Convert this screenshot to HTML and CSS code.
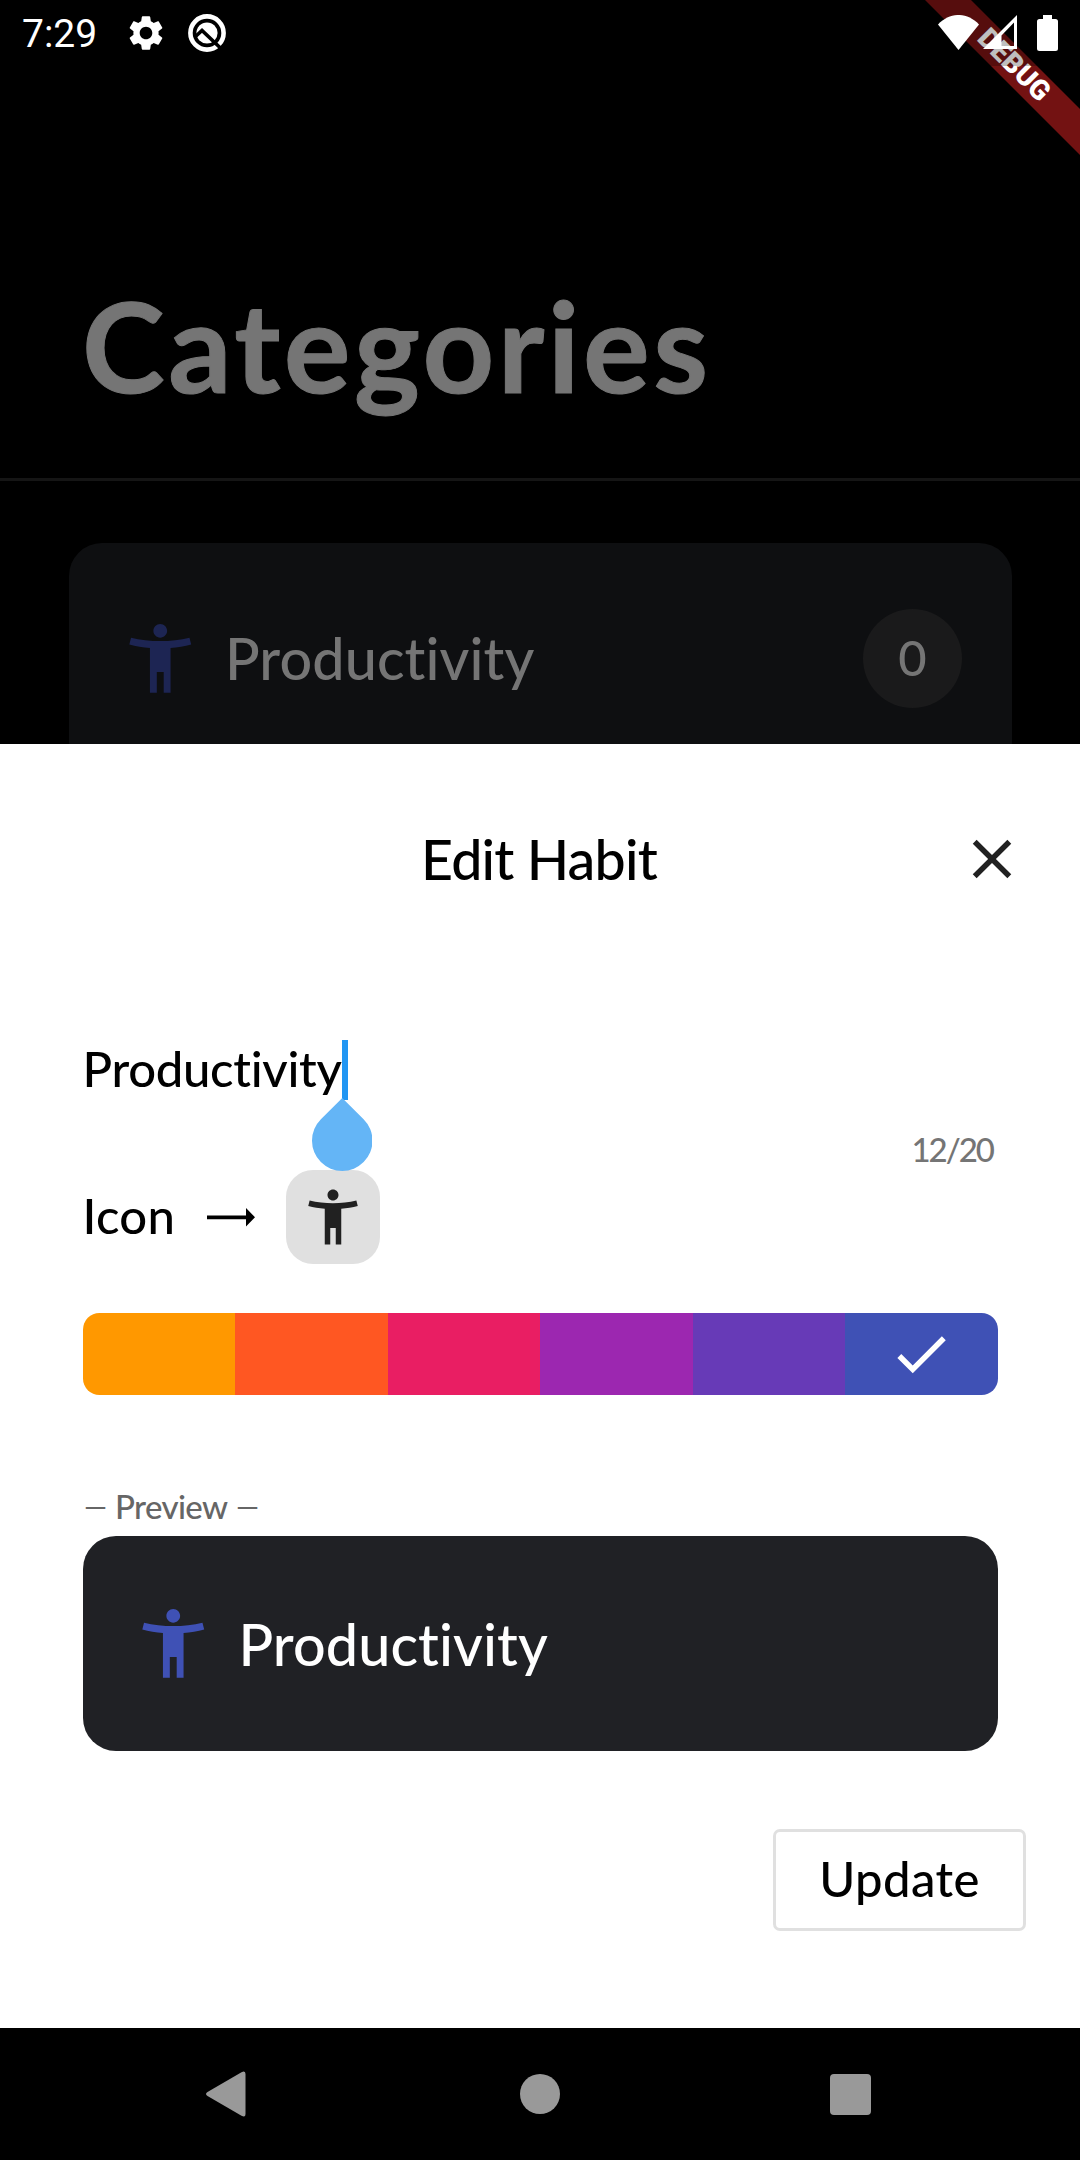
FILE: index.html
```
<!DOCTYPE html>
<html lang="en">
<head>
<meta charset="utf-8">
<title>Edit Habit</title>
<link rel="stylesheet" href="styles.css">
</head>
<body>
<svg class="defs" aria-hidden="true">
  <symbol id="person" viewBox="0 0 24 24"><path d="M20.5 6c-2.61.7-5.67 1-8.5 1s-5.89-.3-8.5-1L3 8c1.86.5 4 .83 6 1v13h2v-6h2v6h2V9c2-.17 4.14-.5 6-1l-.5-2zM12 6c1.1 0 2-.9 2-2s-.9-2-2-2-2 .9-2 2 .9 2 2 2z"/></symbol>
</svg>
<div class="screen">
  <div class="banner">
    <span class="banner-text">DEBUG</span>
  </div>
  <div class="statusbar">
    <span class="clock">7:29</span>
    <svg class="gear" viewBox="0 0 24 24"><path d="M19.14 12.94c.04-.3.06-.61.06-.94 0-.32-.02-.64-.07-.94l2.03-1.58c.18-.14.23-.41.12-.61l-1.92-3.32c-.12-.22-.37-.29-.59-.22l-2.39.96c-.5-.38-1.03-.7-1.62-.94l-.36-2.54c-.04-.24-.24-.41-.48-.41h-3.84c-.24 0-.43.17-.47.41l-.36 2.54c-.59.24-1.13.57-1.62.94l-2.39-.96c-.22-.08-.47 0-.59.22L2.74 8.87c-.12.21-.08.47.12.61l2.03 1.58c-.05.3-.09.63-.09.94s.02.64.07.94l-2.03 1.58c-.18.14-.23.41-.12.61l1.92 3.32c.12.22.37.29.59.22l2.39-.96c.5.38 1.03.7 1.62.94l.36 2.54c.05.24.24.41.48.41h3.84c.24 0 .44-.17.47-.41l.36-2.54c.59-.24 1.13-.56 1.62-.94l2.39.96c.22.08.47 0 .59-.22l1.92-3.32c.12-.22.07-.47-.12-.61l-2.01-1.58zM12 15.6c-1.98 0-3.6-1.62-3.6-3.6s1.62-3.6 3.6-3.6 3.6 1.62 3.6 3.6-1.62 3.6-3.6 3.6z"/></svg>
    <svg class="ring" viewBox="0 0 38 38">
      <circle cx="19" cy="19" r="16.6" fill="none" stroke="#fff" stroke-width="4.6"/>
      <circle cx="19" cy="19" r="10.6" fill="#fff"/>
      <path d="M7.500 22.500l6.500-6L33 34.500" fill="none" stroke="#000" stroke-width="3.600"/>
    </svg>
    <svg class="wifi" viewBox="0 0 41 35"><path d="M0 9.500C12-3.200 29-3.200 41 9.500L20.500 35z"/></svg>
    <svg class="signal" viewBox="0 0 34 34"><path fill-rule="evenodd" d="M0 34L34 0v34zM18.500 20.500V31H31V7.500z"/></svg>
    <svg class="battery" viewBox="0 0 21 36"><path d="M6 0h9v4h3.500A2.500 2.500 0 0 1 21 6.500v27a2.500 2.500 0 0 1-2.500 2.500h-16A2.500 2.500 0 0 1 0 33.500v-27A2.500 2.500 0 0 1 2.500 4H6z"/></svg>
  </div>

  <header class="page-head"><h1>Categories</h1></header>
  <main class="list">
    <div class="card dim">
      <svg class="card-icon"><use href="#person"/></svg>
      <span class="card-name">Productivity</span>
      <span class="badge">0</span>
    </div>
  </main>

  <section class="sheet">
    <div class="sheet-head">
      <h2>Edit Habit</h2>
      <svg class="close" viewBox="0 0 24 24"><path d="M19 6.410L17.590 5 12 10.590 6.410 5 5 6.410 10.590 12 5 17.590 6.410 19 12 13.410 17.590 19 19 17.590 13.410 12z"/></svg>
    </div>
    <div class="field">
      <span class="field-text">Productivity</span>
      <span class="caret"><svg class="handle" viewBox="0 0 60.500 73"><path d="M30.250 0L51.600 21.300a30.250 30.250 0 1 1-42.700 0z"/></svg></span>
    </div>
    <div class="counter">12/20</div>
    <div class="icon-row">
      <span class="icon-label">Icon</span>
      <svg class="arrow" viewBox="0 0 48 19"><path d="M0 7.500h39V0l9 9.250-9 9.250V11.300H0z"/></svg>
      <span class="icon-button"><svg><use href="#person"/></svg></span>
    </div>
    <div class="colors">
      <span class="swatch orange"></span>
      <span class="swatch deep-orange"></span>
      <span class="swatch pink"></span>
      <span class="swatch purple"></span>
      <span class="swatch deep-purple"></span>
      <span class="swatch indigo"><svg viewBox="0 0 24 24"><path d="M9 16.170L4.830 12l-1.420 1.410L9 19 21 7l-1.410-1.410z"/></svg></span>
    </div>
    <div class="preview-label"><span class="dash">—</span><span>Preview</span><span class="dash">—</span></div>
    <div class="card preview">
      <svg class="card-icon"><use href="#person"/></svg>
      <span class="card-name">Productivity</span>
    </div>
    <button class="update">Update</button>
  </section>

  <nav class="navbar">
    <svg viewBox="0 0 40 46"><path d="M35.500 1.200Q39.500-1 39.500 3v40q0 4-4 1.800L1.500 25q-3-2 0-4z"/></svg>
    <svg viewBox="0 0 40 40"><circle cx="20" cy="20" r="20"/></svg>
    <svg viewBox="0 0 41 41"><rect width="41" height="41" rx="4"/></svg>
  </nav>
</div>
</body>
</html>
```
FILE: styles.css
```
* { box-sizing: border-box; }
body {
  margin: 0;
  background: #000;
  font-family: Lato, "Open Sans", sans-serif;
  font-weight: 500;
  font-variant-ligatures: none;
}
h1, h2 { margin: 0; }
svg { display: block; flex: none; }
.defs { position: absolute; width: 0; height: 0; }
.screen {
  position: relative;
  width: 1080px;
  height: 2160px;
  overflow: hidden;
  display: flex;
  flex-direction: column;
  background: #000;
}

/* corner ribbon */
.banner {
  position: absolute;
  top: 0;
  right: 0;
  width: 155px;
  height: 155px;
  background: #731212;
  clip-path: polygon(0 0, 46px 0, 155px 109px, 155px 155px);
}
.banner-text {
  position: absolute;
  left: 28.500px;
  top: 48px;
  width: 120px;
  line-height: 34px;
  text-align: center;
  transform: rotate(45deg);
  font-family: Roboto, sans-serif;
  font-size: 28px;
  font-weight: 900;
  color: #fff;
}

.statusbar {
  position: relative;
  height: 66px;
  flex: none;
  display: flex;
  align-items: flex-start;
  padding: 0 22px 0 22px;
  background: rgba(0, 0, 0, .25);
  fill: #fff;
}
.clock {
  width: 103px;
  font: 400 39px/69px Roboto, sans-serif;
  color: #fff;
}
.gear { width: 42px; height: 42px; margin-top: 12px; }
.ring { width: 38px; height: 38px; margin: 14px auto 0 21px; }
.wifi { width: 41px; height: 35px; margin-top: 15px; }
.signal { width: 34px; height: 34px; margin: 15px 20px 0 4px; }
.battery { width: 21px; height: 36px; margin-top: 15px; }

.page-head {
  flex: none;
  height: 415px;
  padding: 204px 0 0 82px;
  border-bottom: 3px solid #151515;
}
.page-head h1 {
  font-size: 125px;
  line-height: 150px;
  font-weight: 700;
  letter-spacing: 3.500px;
  color: #757575;
  -webkit-text-stroke: 1px #757575;
}
.list {
  height: 263px;
  flex: none;
  overflow: hidden;
  padding: 62px 68.500px 0 69px;
}
.card {
  display: flex;
  align-items: center;
  padding: 0 49.500px;
  border-radius: 33px;
  background: #202125;
  color: #fff;
  fill: #3f51b5;
}
.card.dim {
  height: 231px;
  background: #0e0f11;
  color: #757575;
  fill: #1d2553;
}
.card-icon { width: 82.500px; height: 82.500px; }
.card-name {
  margin: -1px auto 0 24px;
  font-size: 57.500px;
  line-height: 70px;
  letter-spacing: .1px;
}
.badge {
  width: 99px;
  height: 99px;
  border-radius: 50%;
  background: #1a1a1b;
  text-align: center;
  font-size: 49px;
  line-height: 97px;
}

.sheet {
  flex: none;
  height: 1284px;
  background: #fff;
  padding: 82px 82.500px 0;
  display: flex;
  flex-direction: column;
  color: #000;
}
.sheet-head {
  display: grid;
  grid-template-columns: 66px 1fr 66px;
  margin: 0 -27.500px;
  height: 66px;
}
.sheet-head h2 {
  grid-column: 2;
  text-align: center;
  font-size: 55.500px;
  line-height: 65px;
  font-weight: 500;
  letter-spacing: -.8px;
  margin-left: -2px;
}
.close { width: 66px; height: 66px; fill: #212121; }
.field {
  display: flex;
  margin-top: 147.500px;
  height: 60px;
}
.field-text {
  width: 259.500px;
  font-size: 49px;
  line-height: 56px;
  letter-spacing: -.3px;
  white-space: nowrap;
}
.caret {
  position: relative;
  width: 6px;
  height: 60px;
  background: #2196f3;
}
.handle {
  position: absolute;
  left: -30.500px;
  top: 58.500px;
  width: 60.500px;
  height: 73px;
  fill: #64b5f6;
}
.counter {
  margin-top: 29.500px;
  padding-right: 4.500px;
  text-align: right;
  font-size: 33px;
  line-height: 40px;
  letter-spacing: -2px;
  color: #757575;
}
.icon-row {
  display: flex;
  align-items: center;
  height: 94px;
  margin-top: .5px;
}
.icon-label {
  width: 124.500px;
  font-size: 49px;
  line-height: 90px;
  align-self: flex-start;
  letter-spacing: .3px;
}
.arrow { width: 48px; height: 19px; margin-top: 1px; }
.icon-button {
  width: 94px;
  height: 94px;
  margin-left: 30.500px;
  padding: 14px;
  border-radius: 27px;
  background: #e0e0e0;
  fill: #212121;
}
.icon-button svg { width: 66px; height: 66px; }
.colors {
  display: flex;
  height: 82.500px;
  margin-top: 49px;
  border-radius: 16.500px;
  overflow: hidden;
}
.swatch { flex: 1; display: grid; place-items: center; }
.swatch svg { width: 66px; height: 66px; fill: #fff; }
.orange { background: #ff9800; }
.deep-orange { background: #ff5722; }
.pink { background: #e91e63; }
.purple { background: #9c27b0; }
.deep-purple { background: #673ab7; }
.indigo { background: #3f51b5; }
.preview-label {
  display: flex;
  gap: 8.500px;
  margin-top: 91px;
  padding-left: 1.500px;
  font-size: 33px;
  line-height: 40px;
  letter-spacing: -.6px;
  color: #666;
}
.dash { font-size: 29px; }
.card.preview { height: 215px; margin-top: 10px; }
.preview .card-name { margin-top: 0; }
.update {
  align-self: flex-end;
  width: 253px;
  height: 102px;
  margin: 77.500px -28.500px 0 0;
  padding: 0 0 3px;
  border: 3px solid #e0e0e0;
  border-radius: 7px;
  background: #fff;
  color: #000;
  font: 500 49px/60px Lato, "Open Sans", sans-serif;
  letter-spacing: .4px;
}

.navbar {
  flex: 1;
  display: grid;
  grid-template-columns: 1fr 40px 1fr;
  align-items: center;
  padding: 0 209px 0 206px;
  fill: #999;
}
.navbar svg:nth-child(1) { width: 40px; height: 46px; }
.navbar svg:nth-child(2) { width: 40px; height: 40px; margin-left: 1.500px; }
.navbar svg:nth-child(3) { width: 41px; height: 41px; justify-self: end; }
```
